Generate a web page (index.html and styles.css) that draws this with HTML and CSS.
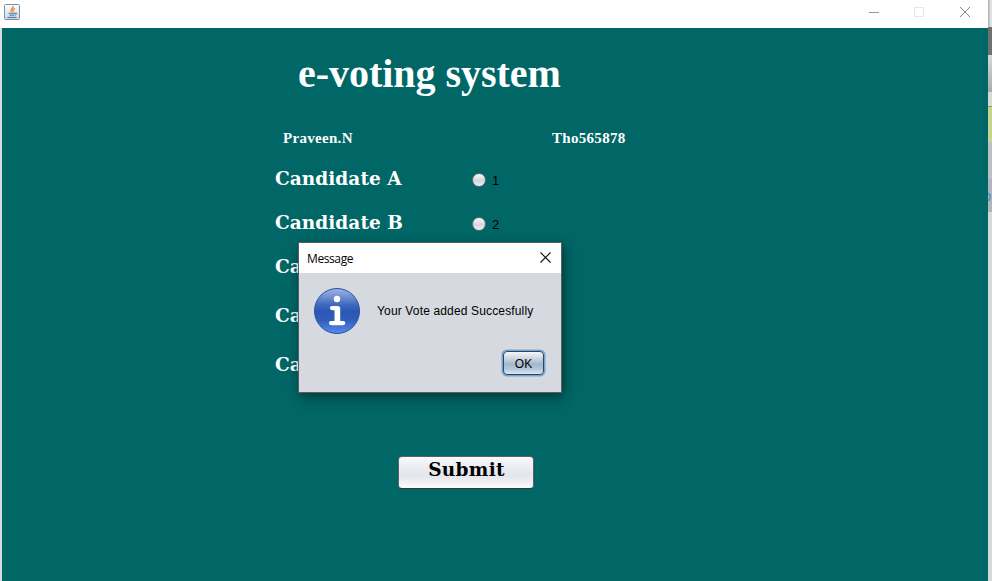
FILE: index.html
```html
<!DOCTYPE html>
<html lang="en">
<head>
<meta charset="utf-8">
<title>e-voting system</title>
<link rel="stylesheet" href="styles.css">
</head>
<body>
<div class="desktop">
  <main class="window">
    <header class="titlebar">
      <svg class="java" width="16" height="16" viewBox="0 0 16 16">
        <defs><linearGradient id="jg" x1="0" y1="0" x2="0" y2="1"><stop offset="0" stop-color="#fff"/><stop offset="1" stop-color="#c9d6e3"/></linearGradient></defs>
        <rect x=".5" y=".5" width="15" height="15" rx="1" fill="url(#jg)" stroke="#7890a5"/>
        <path d="M9 2C10 4 5.500 5 7.500 8M11 4.300C8 5.500 8.500 6.500 9.500 8" fill="none" stroke="#ee8935" stroke-width="1.400"/>
        <path d="M4.500 9.300h6.500M5.500 11.200h5M3.500 13.400h9M11 9.300c2.500-1 2 1.200 0 1.700" fill="none" stroke="#4d7394" stroke-width="1"/>
      </svg>
      <svg class="controls" width="104" height="14" viewBox="0 0 104 14">
        <path d="M0 7.500h10" stroke="#999" fill="none"/>
        <rect x="45.500" y="2.500" width="9" height="9" fill="none" stroke="#e6e6e6"/>
        <path d="M91 2l10 10M101 2l-10 10" stroke="#858585" fill="none"/>
      </svg>
    </header>
    <section class="content">
      <h1>e-voting system</h1>
      <div class="voter"><span class="voter-name">Praveen.N</span><span class="voter-id">Tho565878</span></div>
      <div class="ballot">
        <div class="row"><span class="candidate">Candidate A</span><i class="radio"></i><span class="number">1</span></div>
        <div class="row"><span class="candidate">Candidate B</span><i class="radio"></i><span class="number">2</span></div>
        <div class="row"><span class="candidate">Ca</span></div>
        <div class="row"><span class="candidate">Ca</span></div>
        <div class="row"><span class="candidate">Ca</span></div>
      </div>
      <button class="submit"><span>Submit</span></button>
    </section>
  </main>
  <aside class="behind">
    <i class="strip s1"></i><i class="strip s2"></i><i class="strip s3"></i><i class="strip s4"></i><i class="strip s5"></i><i class="strip s6"></i><i class="strip s7"><svg width="3" height="10" viewBox="0 0 3 10"><path d="M0 1.500C3 2 3 8 0 8.500" fill="none" stroke="#4b91b9" stroke-width="1.300"/></svg></i><i class="strip s8"></i>
  </aside>
</div>
<div class="dialog">
  <div class="dialog-bar"><span class="dialog-title">Message</span>
    <svg width="11" height="11" viewBox="0 0 11 11"><path d="M.5.5l10 10M10.500.5l-10 10" stroke="#111" stroke-width="1.100" fill="none"/></svg>
  </div>
  <div class="dialog-body">
    <div class="message">
      <svg width="46" height="46" viewBox="0 0 46 46">
        <defs><linearGradient id="ig" x1="0" y1="0" x2="0" y2="1"><stop offset="0" stop-color="#9bb2e2"/><stop offset=".12" stop-color="#819eda"/><stop offset=".36" stop-color="#4069be"/><stop offset=".5" stop-color="#2b58b4"/><stop offset=".7" stop-color="#305dbb"/><stop offset="1" stop-color="#5b8aeb"/></linearGradient></defs>
        <circle cx="23" cy="23" r="22.500" fill="url(#ig)" stroke="#28509f"/>
        <circle cx="23" cy="11" r="3.200" fill="#fff"/>
        <path d="M18 18h5.500q2.700 0 2.700 2.700V33h3a2.100 2.100 0 0 1 0 4.200H17a2.100 2.100 0 0 1 0-4.200H20.500v-10.800h-2.500a2.100 2.100 0 0 1 0-4.200z" fill="#fff"/>
      </svg>
      <span class="message-text">Your Vote added Succesfully</span>
    </div>
    <button class="ok"><span>OK</span></button>
  </div>
</div>
</body>
</html>
```
FILE: styles.css
```css
* { box-sizing: border-box; }
body { margin: 0; overflow: hidden; width: 992px; height: 581px; }
svg { display: block; flex: none; }
button { border: 0; padding: 0; }
.desktop { display: flex; height: 581px; background: #d5dde0; padding-left: 2px; }
.window { width: 986px; height: 581px; display: flex; flex-direction: column; }
.titlebar { height: 28px; margin-left: -2px; background: #fff; display: flex; justify-content: space-between; padding: 4px 15px 0 4px; }
.controls { margin-top: 1px; }
.content { flex: 1; background: #006666; color: #fff; display: flex; flex-direction: column; align-items: flex-start; }
h1 { margin: 22px 0 0 296px; height: 48px; font: bold 40px/48px "Liberation Serif", serif; letter-spacing: -.03px; white-space: nowrap; }
.voter { display: flex; margin: 31px 0 0 281px; height: 18px; font: bold 15px/18px "Liberation Serif", serif; letter-spacing: .3px; }
.voter-name { width: 269px; }
.ballot { display: grid; grid-template-rows: 44px 44px 49px 49px 49px; margin: 19px 0 0 273px; }
.row { display: flex; height: 26px; align-items: center; }
.candidate { width: 197px; font: bold 18.5px/26px "DejaVu Serif", serif; letter-spacing: .05px; white-space: nowrap; }
.radio { width: 14px; height: 14px; margin-top: 1px; border-radius: 50%; border: 1px solid #686c70; background: linear-gradient(#fafafb, #d3d6de 55%, #f0f1f5); }
.number { margin: 3px 0 0 6px; color: #000; font: 13px/16px "Liberation Sans", sans-serif; }
.submit { width: 136px; height: 33px; margin: 55px 0 0 396px; border: 1px solid #596268; border-bottom-color: #303b40; border-radius: 4px; background: linear-gradient(#f8f9fa, #e3e6ed 55%, #e8eaf0 70%, #fbfcfd); color: #000; font: bold 18.5px/26px "DejaVu Serif", serif; letter-spacing: .3px; display: flex; justify-content: center; padding-left: 1px; }
.behind { width: 4px; display: flex; flex-direction: column; box-shadow: inset 1px 0 #a6aaac; }
.strip { display: block; }
.s1 { height: 27px; background: linear-gradient(90deg, #aaa, #ddd 60%, #e5e5e5); }
.s2 { height: 28px; background: #707070; }
.s3 { height: 37px; background: linear-gradient(#d8d8d8, #aaa); }
.s4 { height: 14px; background: #d8d8d8; }
.s5 { height: 36px; background: #c7d38e; border-top: 1px solid #86a536; }
.s6 { height: 37px; background: #bcbfc3; }
.s7 { height: 33px; background: #aeb5bd; padding-top: 13px; }
.s8 { flex: 1; background: #d6d8d9; }
.dialog { position: absolute; left: 298px; top: 242px; width: 264px; height: 151px; border: 1px solid #595e60; background: #d6d9e0; box-shadow: 2px 4px 12px rgba(0,0,0,.45); display: flex; flex-direction: column; }
.dialog-bar { height: 30px; background: #fff; display: flex; justify-content: space-between; padding: 9px 10px 0 8px; }
.dialog-title { font: 12px/14px "Open Sans", sans-serif; letter-spacing: -.4px; color: #000; }
.dialog-body { flex: 1; display: flex; flex-direction: column; }
.message { display: flex; align-items: center; margin: 15px 0 0 15px; gap: 17px; }
.message-text { font: 12px/16px "Liberation Sans", sans-serif; letter-spacing: .15px; color: #000; white-space: nowrap; }
.ok { align-self: flex-end; width: 41px; height: 24px; margin: 17px 17px 0 0; border: 1px solid #29455f; border-radius: 4px; box-shadow: 0 0 0 1.5px #76a4cf; background: linear-gradient(#f3f6f9, #c4d0dc 35%, #a5b8cb 55%, #b1c5d7 75%, #d6e6f4); color: #000; font: 12px/24px "Liberation Sans", sans-serif; }
```
